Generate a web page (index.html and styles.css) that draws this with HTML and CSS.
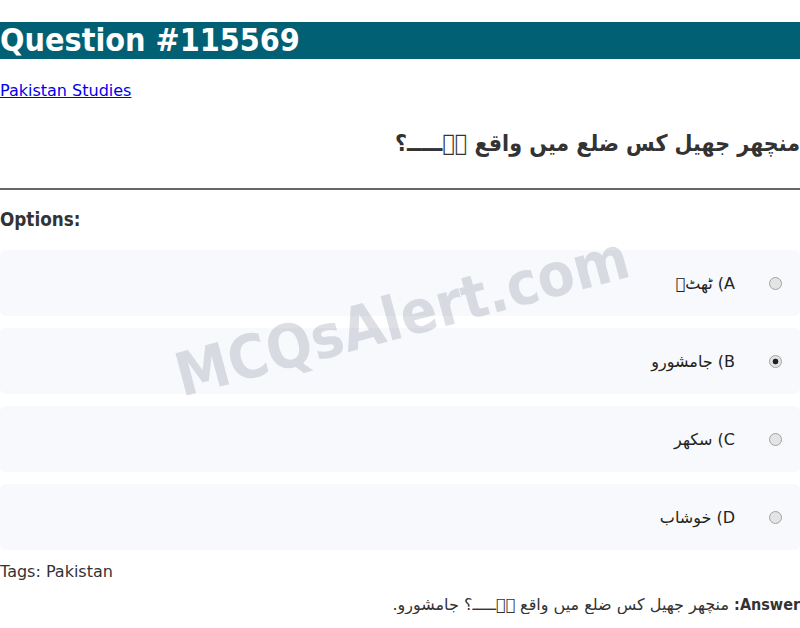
FILE: index.html
```html
<!DOCTYPE html>
<html lang="en">
<head>
<meta charset="utf-8">
<title>Question #115569</title>
<link rel="stylesheet" href="styles.css">
</head>
<body>
<div class="page">
  <h1 class="title">Question #115569</h1>
  <p class="category"><a href="#">Pakistan Studies</a></p>
  <h2 class="question" dir="rtl">منچھر جھیل کس ضلع میں واقع &#xE000;&#xE001;ـــــ؟</h2>
  <hr class="divider">
  <h3 class="options-title">Options:</h3>
  <div class="options">
    <label class="option" dir="rtl"><input type="radio" name="q" disabled><span class="option-text">A) ٹھٹ&#xE000;</span></label>
    <label class="option" dir="rtl"><input type="radio" name="q" disabled checked><span class="option-text">B) جامشورو</span></label>
    <label class="option" dir="rtl"><input type="radio" name="q" disabled><span class="option-text">C) سکھر</span></label>
    <label class="option" dir="rtl"><input type="radio" name="q" disabled><span class="option-text">D) خوشاب</span></label>
  </div>
  <p class="tags">Tags: Pakistan</p>
  <p class="answer" dir="rtl"><strong class="answer-label">Answer:</strong> منچھر جھیل کس ضلع میں واقع &#xE000;&#xE001;ـــــ؟ جامشورو.</p>
  <div class="watermark">MCQsAlert.com</div>
</div>
</body>
</html>
```
FILE: styles.css
```css
html, body {
  margin: 0;
  padding: 0;
  background: #ffffff;
}
body {
  font-family: "DejaVu Sans", sans-serif;
  font-size: 16px;
  color: #333333;
}
.page {
  position: relative;
  display: flex;
  flex-direction: column;
}
.title {
  margin: 22px 0 0 0;
  background: #026075;
  color: #ffffff;
  font-size: 32px;
  line-height: 37px;
  font-weight: bold;
  font-stretch: condensed;
}
.category {
  margin: 22px 0 0 0;
  line-height: 19px;
}
.category a {
  color: #0000ee;
  text-decoration: underline;
}
.question {
  margin: 26px 0 0 0;
  font-size: 23px;
  line-height: 34px;
  font-weight: bold;
  font-stretch: condensed;
  text-align: right;
  color: #333333;
}
.divider {
  margin: 28px 0 0 0;
  border: 0;
  border-top: 2px solid #666666;
  height: 0;
}
.options-title {
  margin: 18px 0 0 0;
  font-size: 18.72px;
  line-height: 24px;
  font-weight: bold;
  font-stretch: condensed;
}
.options {
  margin-top: 18px;
  display: flex;
  flex-direction: column;
  gap: 12px;
}
.option {
  display: flex;
  align-items: center;
  gap: 34px;
  height: 66px;
  padding: 0 18px;
  background: #f8f9fc;
  border-radius: 6px;
}
.option input {
  appearance: none;
  -webkit-appearance: none;
  margin: 0;
  width: 13px;
  height: 13px;
  flex: none;
  border-radius: 50%;
  border: 1px solid #a3a3a3;
  background: #e4e4e4;
  box-sizing: border-box;
}
.option input:checked {
  background: radial-gradient(circle, #222222 0, #222222 2.6px, #e4e4e4 3.2px);
}
.option-text {
  font-size: 16px;
  color: #222222;
}
.tags {
  margin: 12px 0 0 0;
  font-size: 16px;
  line-height: 19px;
}
.answer {
  margin: 14px 0 0 0;
  font-size: 16px;
  line-height: 19px;
}
.answer-label {
  font-weight: bold;
  font-stretch: condensed;
}
.watermark {
  position: absolute;
  left: 402px;
  top: 316px;
  transform: translate(-50%, -50%) rotate(-15deg);
  font-size: 60px;
  font-weight: bold;
  font-stretch: condensed;
  color: rgba(100, 110, 130, 0.22);
  white-space: nowrap;
  pointer-events: none;
}
```
